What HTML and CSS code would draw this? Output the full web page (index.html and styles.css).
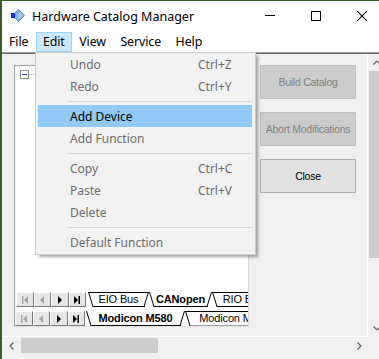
FILE: index.html
```html
<!DOCTYPE html>
<html>
<head>
<meta charset="utf-8">
<title>Hardware Catalog Manager</title>
<link rel="stylesheet" href="styles.css">
</head>
<body>
<div class="window">
  <div class="titlebar">
    <svg class="appicon" width="14" height="14" viewBox="0 0 14 14">
      <polygon points="7.5,0.5 13.5,6.5 7.5,12.5 1.5,6.5" fill="#7fb2e5" stroke="#5b93cf" stroke-width="1"/>
      <polygon points="7.5,2 12,6.5 7.5,11" fill="#a9cdf0"/>
      <rect x="0" y="4" width="4" height="5" fill="#1530e0"/>
    </svg>
    <span class="title">Hardware Catalog Manager</span>
    <div class="caption">
      <div class="cbtn"><svg width="10" height="10" viewBox="0 0 10 10"><line x1="0" y1="4.5" x2="10" y2="4.5" stroke="#000" stroke-width="1"/></svg></div>
      <div class="cbtn"><svg width="10" height="10" viewBox="0 0 10 10"><rect x="0.5" y="0.5" width="9" height="9" fill="none" stroke="#000" stroke-width="1"/></svg></div>
      <div class="cbtn"><svg width="10" height="10" viewBox="0 0 10 10"><path d="M0 0 L10 10 M10 0 L0 10" stroke="#000" stroke-width="1.1"/></svg></div>
    </div>
  </div>
  <div class="menubar">
    <span class="mitem">File</span>
    <span class="mitem open">Edit</span>
    <span class="mitem">View</span>
    <span class="mitem">Service</span>
    <span class="mitem">Help</span>
  </div>
  <div class="client">
    <div class="view">
      <div class="main">
        <div class="panel">
          <div class="tree">
            <span class="expander"><span class="minus"></span></span>
            <span class="dots"></span>
          </div>
          <div class="tabrow row1">
            <div class="navs">
              <span class="nav"><svg width="8" height="8" viewBox="0 0 8 8"><rect x="1" y="0" width="1.5" height="8" fill="#a6a6a6"/><polygon points="7,0 7,8 3,4" fill="#a6a6a6"/></svg></span>
              <span class="nav"><svg width="8" height="8" viewBox="0 0 8 8"><polygon points="6,0 6,8 2,4" fill="#a6a6a6"/></svg></span>
              <span class="nav"><svg width="8" height="8" viewBox="0 0 8 8"><polygon points="2,0 2,8 6,4" fill="#000"/></svg></span>
              <span class="nav"><svg width="8" height="8" viewBox="0 0 8 8"><polygon points="1,0 1,8 5,4" fill="#000"/><rect x="5.5" y="0" width="1.5" height="8" fill="#000"/></svg></span>
            </div>
            <div class="tabs">
              <span class="tab t-eio">EIO Bus</span>
              <span class="tab active t-can">CANopen</span>
              <span class="tab t-rio">RIO Bus</span>
            </div>
          </div>
          <div class="tabrow row2">
            <div class="navs">
              <span class="nav"><svg width="8" height="8" viewBox="0 0 8 8"><rect x="1" y="0" width="1.5" height="8" fill="#a6a6a6"/><polygon points="7,0 7,8 3,4" fill="#a6a6a6"/></svg></span>
              <span class="nav"><svg width="8" height="8" viewBox="0 0 8 8"><polygon points="6,0 6,8 2,4" fill="#a6a6a6"/></svg></span>
              <span class="nav"><svg width="8" height="8" viewBox="0 0 8 8"><polygon points="2,0 2,8 6,4" fill="#000"/></svg></span>
              <span class="nav"><svg width="8" height="8" viewBox="0 0 8 8"><polygon points="1,0 1,8 5,4" fill="#000"/><rect x="5.5" y="0" width="1.5" height="8" fill="#000"/></svg></span>
            </div>
            <div class="tabs">
              <span class="tab active t-m580">Modicon M580</span>
              <span class="tab t-m2">Modicon M340</span>
            </div>
          </div>
        </div>
        <div class="actions">
          <button class="btn" disabled>Build Catalog</button>
          <button class="btn" disabled>Abort Modifications</button>
          <button class="btn enabled">Close</button>
        </div>
      </div>
      <div class="vscroll">
        <div class="varrow"><svg width="8" height="5" viewBox="0 0 8 5"><polyline points="0.5,4.5 4,1 7.5,4.5" fill="none" stroke="#606060" stroke-width="1.2"/></svg></div>
        <div class="vthumb"></div>
        <div class="vtrack"></div>
        <div class="varrow"><svg width="8" height="5" viewBox="0 0 8 5"><polyline points="0.5,0.5 4,4 7.5,0.5" fill="none" stroke="#606060" stroke-width="1.2"/></svg></div>
      </div>
    </div>
    <div class="hrow">
      <div class="hscroll">
        <div class="harrow left"><svg width="5" height="8" viewBox="0 0 5 8"><polyline points="4.5,0.5 1,4 4.5,7.5" fill="none" stroke="#606060" stroke-width="1.2"/></svg></div>
        <div class="hthumb"></div>
        <div class="htrack"></div>
        <div class="harrow right"><svg width="5" height="8" viewBox="0 0 5 8"><polyline points="0.5,0.5 4,4 0.5,7.5" fill="none" stroke="#606060" stroke-width="1.2"/></svg></div>
      </div>
      <div class="corner"></div>
    </div>
  </div>
</div>

<div class="dropdown">
  <div class="ditem"><span>Undo</span><span>Ctrl+Z</span></div>
  <div class="ditem"><span>Redo</span><span>Ctrl+Y</span></div>
  <div class="dsep"></div>
  <div class="ditem hot"><span>Add Device</span><span></span></div>
  <div class="ditem"><span>Add Function</span><span></span></div>
  <div class="dsep"></div>
  <div class="ditem"><span>Copy</span><span>Ctrl+C</span></div>
  <div class="ditem"><span>Paste</span><span>Ctrl+V</span></div>
  <div class="ditem"><span>Delete</span><span></span></div>
  <div class="dsep"></div>
  <div class="ditem"><span>Default Function</span><span></span></div>
</div>
</body>
</html>
```

FILE: styles.css
```css
* { box-sizing: border-box; }

body {
  margin: 0;
  width: 379px;
  height: 359px;
  overflow: hidden;
  position: relative;
  background: #355f24;
  font-family: "Noto Sans", "Open Sans", sans-serif;
}

.window {
  margin: 1px 0 0 2px;
  width: 383px;
  height: 358px;
  background: #f0f0f0;
}

/* title bar */
.titlebar {
  height: 30px;
  background: #fff;
  display: flex;
  align-items: center;
}
.appicon { margin-left: 9px; flex: none; }
.title {
  margin-left: 7px;
  font-size: 12.5px;
  color: #000;
  white-space: nowrap;
}
.caption { margin-left: auto; display: flex; height: 30px; }
.cbtn {
  width: 46px;
  height: 30px;
  display: flex;
  align-items: center;
  justify-content: center;
}

/* menu bar */
.menubar {
  height: 21px;
  background: #fff;
  display: flex;
  align-items: flex-start;
  padding-left: 0;
}
.mitem {
  height: 20px;
  margin-top: 1px;
  padding: 0 6.5px 0 6px;
  border: 1px solid transparent;
  font-size: 12.4px;
  letter-spacing: -0.1px;
  line-height: 17px;
  color: #000;
}
.mitem.open { background: #cce8ff; border-color: #99d1ff; }

/* client */
.client { border-top: 1px solid #a0a0a0; }
.view {
  display: flex;
  height: 284px;
  border-top: 1px solid #6a6a6a;
}
.main {
  width: 366px;
  flex: none;
  border-right: 1px solid #fff;
  border-bottom: 1px solid #fff;
  display: flex;
  align-items: flex-start;
  padding: 11px 0 0 12px;
}
.panel {
  width: 235px;
  height: 262px;
  background: #fff;
  border-left: 1px solid #a0a0a0;
  border-top: 1px solid #a0a0a0;
  border-right: 1px solid #dadada;
  border-bottom: 1px solid #e6e6e6;
  display: flex;
  flex-direction: column;
  overflow: hidden;
}
.tree { flex: 1; padding: 4px 0 0 5px; display: flex; align-items: flex-start; }
.expander {
  width: 9px;
  height: 9px;
  border: 1px solid #8f8f8f;
  display: flex;
  align-items: center;
  justify-content: center;
}
.minus { width: 5px; height: 1px; background: #2c4a9a; }
.dots {
  width: 7px;
  margin-top: 4px;
  border-top: 1px dotted #9a9a9a;
}

.tabrow { height: 15px; display: flex; flex: none; }
.row1 { margin-bottom: 4px; }
.navs { display: flex; flex: none; }
.row1 .navs { margin-left: 1px; margin-right: 2px; }
.row2 .navs { margin-right: 1px; }
.nav {
  width: 17.5px;
  height: 15px;
  background: #e6e6e6;
  border: 1px solid;
  border-color: #fff #7a7a7a #7a7a7a #fff;
  display: flex;
  align-items: center;
  justify-content: center;
}
.tabs { display: flex; flex: none; }
.tab {
  --edge: #000;
  position: relative;
  height: 15px;
  flex: none;
  text-align: center;
  white-space: nowrap;
  font-family: "Liberation Sans", Arial, sans-serif;
  font-size: 11px;
  letter-spacing: -0.15px;
  line-height: 14px;
  color: #000;
  background:
    linear-gradient(#000, #000) center bottom / calc(100% - 9px) 1px no-repeat,
    linear-gradient(#000, #000) center top / 100% 1px no-repeat,
    #fff;
}
.tab::before,
.tab::after {
  content: "";
  position: absolute;
  top: 0;
  width: 1px;
  height: 15px;
  background: var(--edge);
}
.tab::before { left: 0; transform-origin: 0 0; transform: skewX(17deg); }
.tab::after { right: 0; transform-origin: 100% 0; transform: skewX(-17deg); }
.tab.active {
  font-weight: bold;
  z-index: 1;
  background:
    linear-gradient(#000, #000) center bottom / calc(100% - 9px) 1px no-repeat,
    #fff;
}
.row2 .tab:not(.active) {
  background:
    linear-gradient(#a0a0a0, #a0a0a0) center bottom / calc(100% - 9px) 1px no-repeat,
    linear-gradient(#000, #000) center top / 100% 1px no-repeat,
    #fff;
}
.t-eio { width: 61px; }
.t-can { width: 63px; }
.t-rio { width: 62px; }
.t-m580 { width: 99px; }
.t-m2 { width: 99px; }

/* action buttons */
.actions {
  margin-left: 11px;
  width: 96px;
  display: flex;
  flex-direction: column;
  gap: 13px;
}
.btn {
  height: 34px;
  margin: 0;
  padding: 0;
  font-family: "Liberation Sans", Arial, sans-serif;
  font-size: 10.5px;
  letter-spacing: -0.25px;
  background: #cccccc;
  border: 1px solid #bfbfbf;
  color: #838383;
  white-space: nowrap;
}
.btn.enabled { background: #e1e1e1; border-color: #adadad; color: #000; }

/* scrollbars */
.vscroll {
  width: 17px;
  flex: none;
  display: flex;
  flex-direction: column;
  background: #f0f0f0;
}
.varrow { height: 17px; flex: none; display: flex; align-items: center; justify-content: center; }
.vthumb { height: 187px; flex: none; background: #cdcdcd; margin: 0 1px; }
.vtrack { flex: 1; }

.hrow { display: flex; height: 17px; }
.hscroll { width: 366px; flex: none; display: flex; background: #f0f0f0; }
.harrow { width: 19px; flex: none; display: flex; align-items: center; justify-content: center; }
.harrow.right { width: 17px; }
.hthumb { width: 137px; margin: 1px 0; background: #cdcdcd; }
.htrack { flex: 1; }
.corner { flex: 1; background: #f0f0f0; }

/* dropdown menu */
.dropdown {
  position: absolute;
  left: 35px;
  top: 52px;
  width: 221px;
  height: 203px;
  background: #f2f2f2;
  border: 1px solid #cccccc;
  box-shadow: 3px 3px 3px -1px rgba(0, 0, 0, 0.35);
  padding: 0 3px 1px 2px;
  font-size: 12px;
  z-index: 5;
}
.ditem {
  height: 22px;
  padding-top: 2px;
  line-height: 20px;
  display: grid;
  grid-template-columns: 128px 1fr;
  padding-left: 32px;
  color: #6d6d6d;
  white-space: nowrap;
}
.ditem.hot { background: #91c9f7; color: #000; }
.dsep {
  height: 8px;
  margin-left: 29px;
  background: linear-gradient(#d7d7d7, #d7d7d7) 0 4px / 100% 1px no-repeat;
}
```
